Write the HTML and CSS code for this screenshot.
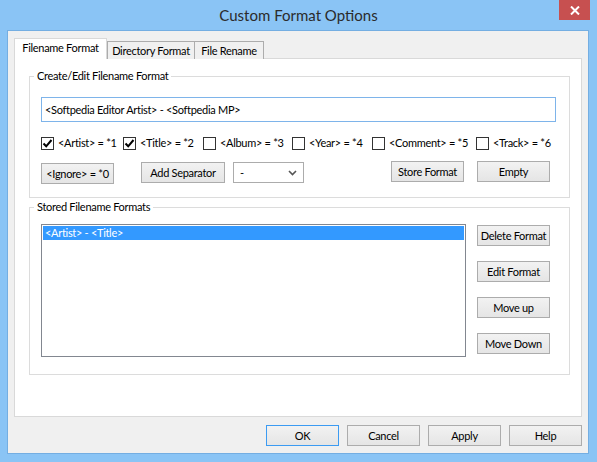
FILE: index.html
```html
<!DOCTYPE html>
<html>
<head>
  <meta charset="UTF-8">
  <title>Custom Format Options</title>
  <link rel="stylesheet" href="styles.css">
</head>
<body>
  <div class="window">
    <div class="titlebar">
      <span class="title">Custom Format Options</span>
      <span class="close">
        <svg width="10" height="9" viewBox="0 0 10 9"><path d="M1 0.5 L9 8.5 M9 0.5 L1 8.5" stroke="#fff" stroke-width="2"/></svg>
      </span>
    </div>
    <div class="client">
      <div class="tabs">
        <div class="tab active">Filename Format</div>
        <div class="tab dir">Directory Format</div>
        <div class="tab ren">File Rename</div>
      </div>
      <div class="panel">
        <fieldset class="group create">
          <legend>Create/Edit Filename Format</legend>
          <div class="input">&lt;Softpedia Editor Artist&gt; - &lt;Softpedia MP&gt;</div>
          <div class="checks">
            <label class="check"><span class="box"><svg width="11" height="11" viewBox="0 0 11 11"><path d="M1.5 5.5 L4.2 8.3 L9.5 2" stroke="#000" stroke-width="2" fill="none"/></svg></span>&lt;Artist&gt; = *1</label>
            <label class="check"><span class="box"><svg width="11" height="11" viewBox="0 0 11 11"><path d="M1.5 5.5 L4.2 8.3 L9.5 2" stroke="#000" stroke-width="2" fill="none"/></svg></span>&lt;Title&gt; = *2</label>
            <label class="check"><span class="box"></span>&lt;Album&gt; = *3</label>
            <label class="check"><span class="box"></span>&lt;Year&gt; = *4</label>
            <label class="check"><span class="box"></span>&lt;Comment&gt; = *5</label>
            <label class="check"><span class="box"></span>&lt;Track&gt; = *6</label>
          </div>
          <div class="btnrow">
            <button class="btn ignore">&lt;Ignore&gt; = *0</button>
            <button class="btn addsep">Add Separator</button>
            <div class="select">
              <span>-</span>
              <svg width="9" height="6" viewBox="0 0 9 6"><path d="M1 1 L4.5 4.5 L8 1" stroke="#555" stroke-width="1.6" fill="none"/></svg>
            </div>
            <button class="btn store">Store Format</button>
            <button class="btn empty">Empty</button>
          </div>
        </fieldset>
        <fieldset class="group stored">
          <legend>Stored Filename Formats</legend>
          <div class="stored-body">
            <div class="list">
              <div class="item selected">&lt;Artist&gt; - &lt;Title&gt;</div>
            </div>
            <div class="side">
              <button class="btn">Delete Format</button>
              <button class="btn">Edit Format</button>
              <button class="btn">Move up</button>
              <button class="btn">Move Down</button>
            </div>
          </div>
        </fieldset>
      </div>
      <div class="footer">
        <button class="btn default">OK</button>
        <button class="btn">Cancel</button>
        <button class="btn">Apply</button>
        <button class="btn">Help</button>
      </div>
    </div>
  </div>
</body>
</html>
```

FILE: styles.css
```css
* {
  box-sizing: border-box;
}
body {
  margin: 0;
  width: 597px;
  height: 462px;
  overflow: hidden;
  font-family: Lato, "Liberation Sans", Arial, sans-serif;
  font-size: 11px;
  letter-spacing: -0.3px;
  color: #000;
  white-space: nowrap;
}
.window {
  width: 597px;
  height: 462px;
  background-color: #8ac4f5;
  padding: 0 8px 8px 7px;
  display: flex;
  flex-direction: column;
}
.titlebar {
  height: 30px;
  position: relative;
  display: flex;
  align-items: center;
  justify-content: center;
}
.title {
  font-size: 15px;
  letter-spacing: 0;
  color: #2b2b2b;
  margin-left: 1px;
}
.close {
  position: absolute;
  top: 0;
  right: -1px;
  width: 31px;
  height: 20px;
  background-color: #c75050;
  display: flex;
  align-items: center;
  justify-content: center;
}
.client {
  flex: 1;
  background-color: #f0f0f0;
  border: 1px solid #74aee2;
  padding: 7px 6px 0 6px;
  display: flex;
  flex-direction: column;
}
.tabs {
  display: flex;
  align-items: flex-end;
  height: 21px;
  margin-bottom: -1px;
  position: relative;
  z-index: 1;
}
.tab {
  height: 18px;
  border: 1px solid #acacac;
  border-bottom: none;
  background-color: #f0f0f0;
  text-align: center;
  line-height: 17px;
  margin-left: -1px;
}
.tab.active {
  height: 21px;
  width: 93px;
  margin-left: 0;
  background-color: #fff;
  border-color: #d9d9d9;
  line-height: 18px;
}
.tab.dir {
  width: 88px;
  margin-left: 0;
}
.tab.ren {
  width: 70px;
}
.panel {
  height: 359px;
  background-color: #fff;
  border: 1px solid #d9d9d9;
}
.group {
  margin: 9px 0 0 14px;
  width: 541px;
  border: 1px solid #dcdcdc;
  padding: 0 12px 0 11px;
  min-width: 0;
}
.group legend {
  margin-left: -7px;
  padding: 0 3px;
  line-height: 16px;
  height: 16px;
}
.group.create {
  padding-bottom: 13px;
}
.group.stored {
  margin-top: 1px;
  padding-bottom: 17px;
}
.input {
  margin-top: 13px;
  width: 515px;
  height: 25px;
  border: 1px solid #7eb4ea;
  padding: 0 3px;
  line-height: 23px;
}
.checks {
  margin-top: 14px;
  height: 14px;
  display: grid;
  grid-template-columns: 82px 80px 89px 80px 104px auto;
}
.check {
  display: flex;
  align-items: center;
  gap: 4px;
  line-height: 14px;
}
.box {
  width: 13px;
  height: 13px;
  border: 1px solid #333;
  background-color: #fff;
  display: flex;
  align-items: center;
  justify-content: center;
}
.btnrow {
  margin-top: 11px;
  height: 23px;
  display: flex;
  align-items: flex-start;
}
.btn {
  height: 21px;
  width: 73px;
  padding: 0;
  border: 1px solid #acacac;
  background: linear-gradient(#f2f2f2, #e5e5e5);
  font-family: inherit;
  font-size: 11px;
  letter-spacing: -0.3px;
  color: #000;
  white-space: nowrap;
  display: flex;
  align-items: center;
  justify-content: center;
}
.btn.default {
  border-color: #3c9bf2;
}
.btn.ignore {
  margin-top: 2px;
}
.btn.addsep {
  margin-top: 1px;
  margin-left: 27px;
  width: 84px;
}
.select {
  margin-top: 1px;
  margin-left: 8px;
  width: 71px;
  height: 21px;
  border: 1px solid #acacac;
  background-color: #fff;
  display: flex;
  align-items: center;
  justify-content: space-between;
  padding: 0 6px 0 6px;
}
.btn.store {
  margin-left: 87px;
}
.btn.empty {
  margin-left: 13px;
}
.stored-body {
  margin-top: 9px;
  display: flex;
  align-items: flex-start;
}
.list {
  width: 425px;
  height: 133px;
  border: 1px solid #828790;
  padding: 1px;
}
.item {
  height: 14px;
  line-height: 14px;
  padding-left: 2px;
}
.item.selected {
  background-color: #3399ff;
  color: #fff;
}
.side {
  margin-left: 11px;
  margin-top: 1px;
  display: flex;
  flex-direction: column;
  gap: 15px;
}
.footer {
  margin-top: 8px;
  display: flex;
  justify-content: flex-end;
  gap: 8px;
}
```
